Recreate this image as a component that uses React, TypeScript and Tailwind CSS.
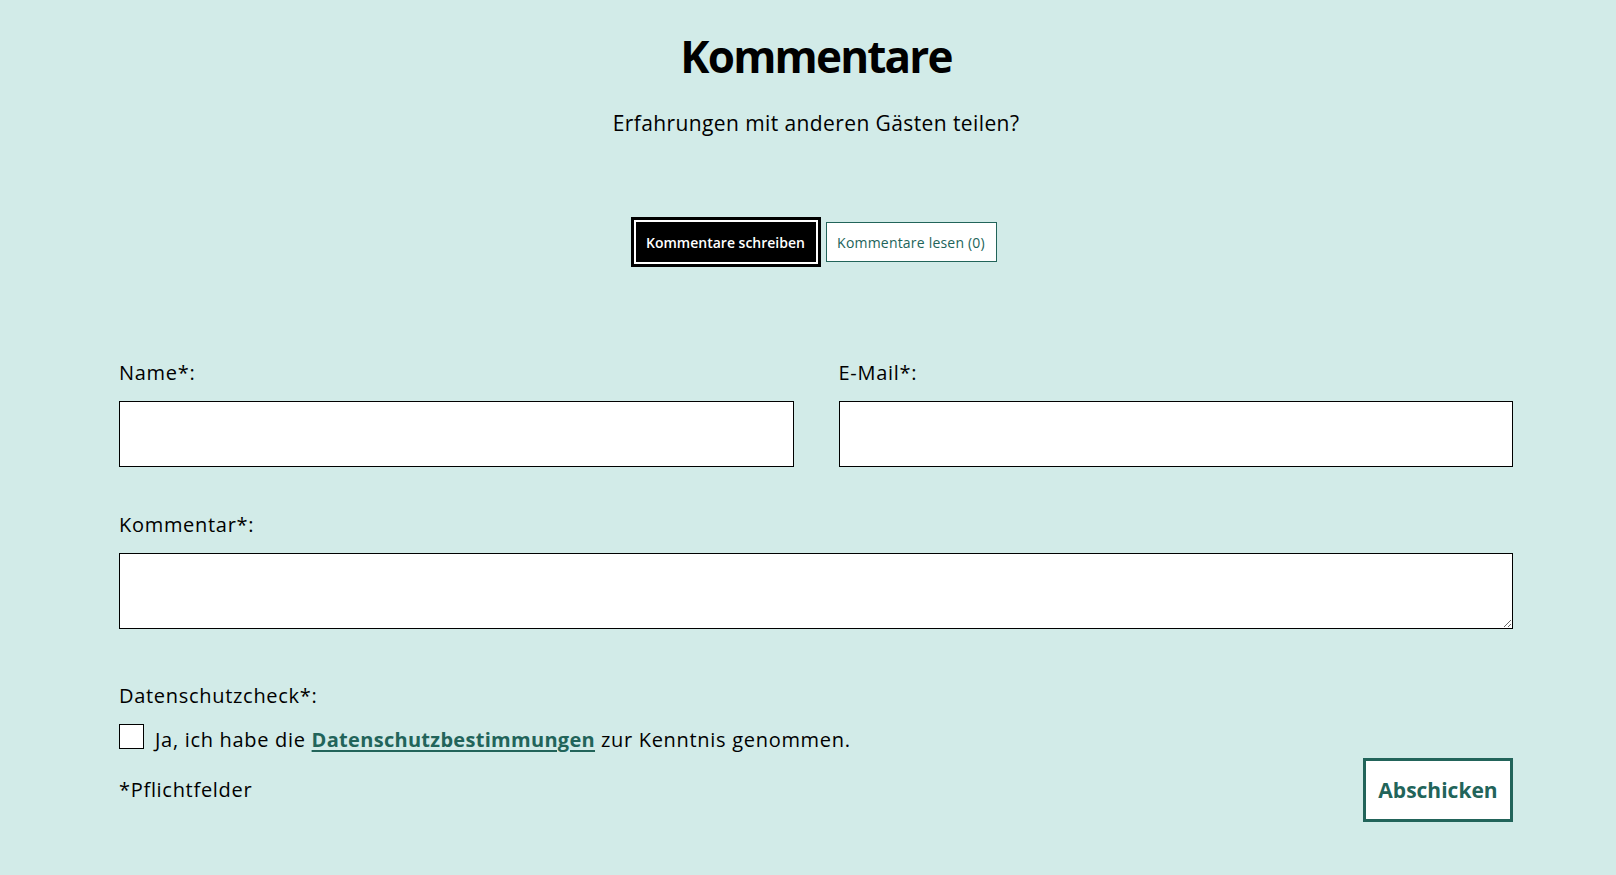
import React, { useState } from 'react';

const App: React.FC = () => {
  const [tab, setTab] = useState<'write' | 'read'>('write');
  const [name, setName] = useState('');
  const [email, setEmail] = useState('');
  const [comment, setComment] = useState('');
  const [accepted, setAccepted] = useState(false);

  return (
    <div className="min-h-screen bg-[#d2ebe8] pl-[119px] font-['Open_Sans','Noto_Sans',sans-serif] text-black">
      <div className="w-[1394px]">
        <h1 className="pt-[28px] text-center text-[44px] font-bold leading-[56px] tracking-[-1.8px]">
          Kommentare
        </h1>
        <p className="mt-[24px] text-center text-[21px] leading-[30px] tracking-[0.4px]">
          Erfahrungen mit anderen Gästen teilen?
        </p>

        <div className="mt-[84px] flex justify-center gap-[10px]">
          <button
            type="button"
            onClick={() => setTab('write')}
            className="h-[40px] w-[180px] bg-black text-[14px] font-semibold text-white shadow-[0_0_0_2px_#fff,0_0_0_5px_#000]"
          >
            Kommentare schreiben
          </button>
          <button
            type="button"
            onClick={() => setTab('read')}
            className="h-[40px] w-[171px] border border-[#22645a] bg-white text-[14px] tracking-[0.2px] text-[#22645a]"
          >
            Kommentare lesen (0)
          </button>
        </div>

        {tab === 'write' && (
          <form className="mt-[97px] text-[20px] leading-[28px] tracking-[0.7px]" onSubmit={(e) => e.preventDefault()}>
            <div className="grid grid-cols-2 gap-x-[45px]">
              <div>
                <label className="block">Name*:</label>
                <input
                  type="text"
                  value={name}
                  onChange={(e) => setName(e.target.value)}
                  className="mt-[14px] block h-[66px] w-full border border-black bg-white px-3 text-[18px] outline-none"
                />
              </div>
              <div>
                <label className="block">E-Mail*:</label>
                <input
                  type="email"
                  value={email}
                  onChange={(e) => setEmail(e.target.value)}
                  className="mt-[14px] block h-[66px] w-full border border-black bg-white px-3 text-[18px] outline-none"
                />
              </div>
            </div>

            <label className="mt-[44px] block">Kommentar*:</label>
            <textarea
              value={comment}
              onChange={(e) => setComment(e.target.value)}
              className="mt-[14px] block h-[76px] w-full border border-black bg-white px-3 py-2 text-[18px] outline-none"
            />

            <p className="mt-[53px]">Datenschutzcheck*:</p>
            <label className="mt-[14px] flex items-start gap-[11px]">
              <input
                type="checkbox"
                checked={accepted}
                onChange={(e) => setAccepted(e.target.checked)}
                className="h-[25px] w-[25px] shrink-0 appearance-none border border-black bg-white checked:bg-[#22645a]"
              />
              <span className="mt-[2px]">
                Ja, ich habe die{' '}
                <a href="#" className="font-bold tracking-[0.3px] text-[#22645a] underline decoration-2 underline-offset-[3px]">
                  Datenschutzbestimmungen
                </a>{' '}
                zur Kenntnis genommen.
              </span>
            </label>

            <div className="mt-[4px] flex items-center justify-between">
              <span>*Pflichtfelder</span>
              <button
                type="submit"
                className="h-[64px] w-[150px] border-[3px] border-[#22645a] bg-white text-[21px] font-bold tracking-normal text-[#22645a]"
              >
                Abschicken
              </button>
            </div>
          </form>
        )}
      </div>
    </div>
  );
};

export default App;
